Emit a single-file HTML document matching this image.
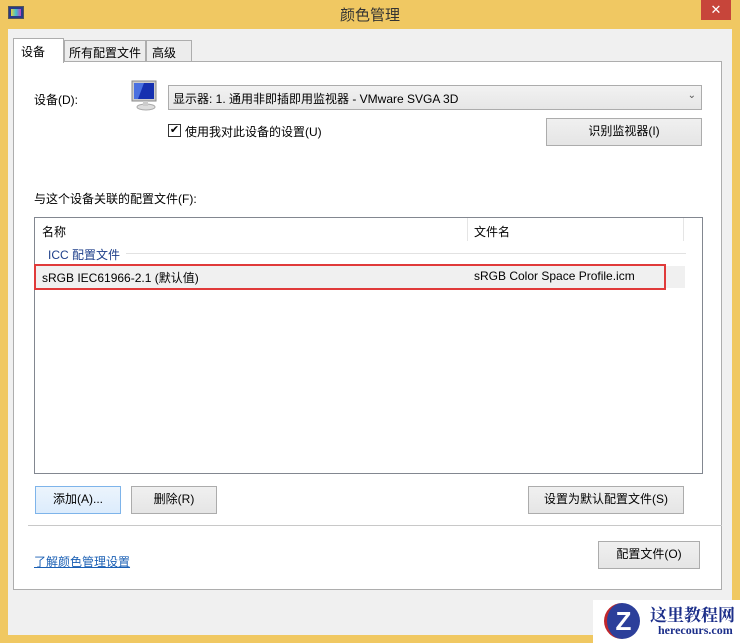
<!DOCTYPE html>
<html><head><meta charset="utf-8"><style>
*{box-sizing:border-box;margin:0;padding:0}
body{width:740px;height:643px;background:#f0c862;position:relative;overflow:hidden;font-family:"Liberation Sans","Noto Sans CJK SC",sans-serif;font-size:12px;color:#000}
.a{position:absolute}
.btn{position:absolute;border:1px solid #acacac;background:linear-gradient(#f0f0f0,#e5e5e5);text-align:center;line-height:25px;font-size:12px}
</style></head><body>
<div class="a" style="left:0;top:0;width:740px;height:29px;background:#f0c862"></div>
<div class="a" style="left:8px;top:6px;width:16px;height:13px;background:#2a3a8a;border:1px solid #555"></div>
<div class="a" style="left:11px;top:9px;width:10px;height:7px;background:linear-gradient(90deg,#e8d040,#40c0d0,#c040c0)"></div>
<div class="a" style="left:0;top:4px;width:740px;text-align:center;font-size:15px;color:#333">颜色管理</div>
<div class="a" style="left:701px;top:0;width:30px;height:20px;background:#c7453a;color:#fff;text-align:center;line-height:19px;font-size:13px">✕</div>
<div class="a" style="left:8px;top:29px;width:724px;height:606px;background:#f0f0f0"></div>
<div class="a" style="left:13px;top:61px;width:709px;height:529px;background:#fff;border:1px solid #adadad"></div>
<div class="a" style="left:13px;top:38px;width:51px;height:25px;background:#fff;border:1px solid #adadad;border-bottom:none;padding:4px 0 0 7px">设备</div>
<div class="a" style="left:64px;top:40px;width:82px;height:22px;background:#ececec;border:1px solid #adadad;padding:3px 0 0 4px">所有配置文件</div>
<div class="a" style="left:146px;top:40px;width:46px;height:22px;background:#ececec;border:1px solid #adadad;padding:3px 0 0 5px">高级</div>
<div class="a" style="left:34px;top:91px">设备(D):</div>
<svg class="a" style="left:130px;top:80px" width="30" height="32"><rect x="2" y="1" width="24" height="20" fill="#ccc" stroke="#888"/><rect x="4" y="3" width="20" height="16" fill="#1530b0"/><path d="M4 3 L14 3 L8 19 L4 19Z" fill="#4a70e0"/><ellipse cx="16" cy="27" rx="9" ry="3" fill="#ddd" stroke="#aaa"/><rect x="13" y="21" width="5" height="5" fill="#ccc"/></svg>
<div class="a" style="left:168px;top:85px;width:534px;height:25px;border:1px solid #acacac;background:linear-gradient(#f2f2f2,#e6e6e6);padding:4px 0 0 4px">显示器: 1. 通用非即插即用监视器 - VMware SVGA 3D<span style="position:absolute;right:5px;top:4px;font-size:10px;color:#555">⌄</span></div>
<div class="a" style="left:168px;top:124px;width:13px;height:13px;border:1px solid #333;background:#fff;font-size:11px;line-height:11px;text-align:center">✔</div>
<div class="a" style="left:185px;top:123px">使用我对此设备的设置(U)</div>
<div class="btn" style="left:546px;top:118px;width:156px;height:28px">识别监视器(I)</div>
<div class="a" style="left:34px;top:190px">与这个设备关联的配置文件(F):</div>
<div class="a" style="left:34px;top:217px;width:669px;height:257px;border:1px solid #828790;background:#fff"></div>
<div class="a" style="left:42px;top:223px">名称</div>
<div class="a" style="left:467px;top:218px;width:1px;height:23px;background:#e5e5e5"></div>
<div class="a" style="left:683px;top:218px;width:1px;height:23px;background:#e5e5e5"></div>
<div class="a" style="left:474px;top:223px">文件名</div>
<div class="a" style="left:48px;top:246px;color:#1e3f8a">ICC 配置文件</div>
<div class="a" style="left:126px;top:253px;width:560px;height:1px;background:#e2e2e2"></div>
<div class="a" style="left:35px;top:266px;width:650px;height:22px;background:#f0f0f0"></div>
<div class="a" style="left:34px;top:264px;width:632px;height:26px;border:2px solid #e03a3a"></div>
<div class="a" style="left:42px;top:269px">sRGB IEC61966-2.1 (默认值)</div>
<div class="a" style="left:474px;top:269px">sRGB Color Space Profile.icm</div>
<div class="btn" style="left:35px;top:486px;width:86px;height:28px;border-color:#7eb4ea;background:linear-gradient(#ecf4fc,#dcecfc)">添加(A)...</div>
<div class="btn" style="left:131px;top:486px;width:86px;height:28px">删除(R)</div>
<div class="btn" style="left:528px;top:486px;width:156px;height:28px">设置为默认配置文件(S)</div>
<div class="a" style="left:28px;top:525px;width:694px;height:1px;background:#c8c8c8"></div>
<div class="a" style="left:34px;top:553px;color:#1a5fb4;text-decoration:underline">了解颜色管理设置</div>
<div class="btn" style="left:598px;top:541px;width:102px;height:28px">配置文件(O)</div>
<div class="a" style="left:593px;top:600px;width:147px;height:43px;background:#fff"></div>
<div class="a" style="left:604px;top:603px;width:36px;height:36px;border-radius:50%;background:#2c3f9a;color:#fff;font-weight:bold;font-size:26px;text-align:center;line-height:36px;border-left:3px solid #c0272d">Z</div>
<div class="a" style="left:650px;top:601px;font-family:'Noto Serif CJK SC',serif;font-weight:bold;font-size:17px;color:#1c2f8a">这里教程网</div>
<div class="a" style="left:658px;top:623px;font-family:'Liberation Serif',serif;font-weight:bold;font-size:12px;color:#1c2f8a">herecours.com</div>
</body></html>
